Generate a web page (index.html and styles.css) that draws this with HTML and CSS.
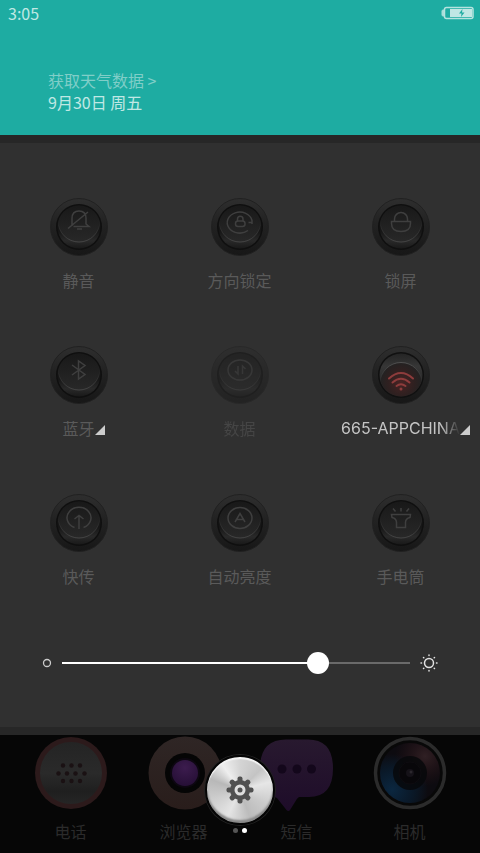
FILE: index.html
```html
<!DOCTYPE html>
<html lang="zh-CN">
<head>
<meta charset="utf-8">
<meta name="viewport" content="width=device-width, initial-scale=1">
<title>控制中心</title>
<link rel="stylesheet" href="styles.css">
</head>
<body>
<svg class="defs" aria-hidden="true">
  <defs>
    <linearGradient id="rim" x1="0" y1="0" x2="0" y2="1"><stop offset="0" stop-color="#2e2e2e"/><stop offset=".4" stop-color="#232323"/><stop offset="1" stop-color="#171717"/></linearGradient>
    <linearGradient id="side" x1="0" y1="0" x2="0" y2="1"><stop offset=".6" stop-color="#161616"/><stop offset=".82" stop-color="#292929"/><stop offset="1" stop-color="#191919"/></linearGradient>
    <linearGradient id="face" x1="0" y1="0" x2="0" y2="1"><stop offset=".1" stop-color="#181818"/><stop offset="1" stop-color="#282828"/></linearGradient>
    <linearGradient id="edge" x1="0" y1="0" x2="0" y2="1"><stop offset=".5" stop-color="#444" stop-opacity="0"/><stop offset="1" stop-color="#444"/></linearGradient>
    <linearGradient id="edge-on" x1="0" y1="0" x2="0" y2="1"><stop offset="0" stop-color="#505050"/><stop offset=".5" stop-color="#444" stop-opacity="0"/></linearGradient>
    <linearGradient id="side-on" x1="0" y1="0" x2="0" y2="1"><stop offset="0" stop-color="#242424"/><stop offset=".3" stop-color="#363636"/><stop offset="1" stop-color="#1d1d1d"/></linearGradient>
    <radialGradient id="face-on" cx=".5" cy=".48" r=".5"><stop offset="0" stop-color="#482323"/><stop offset=".6" stop-color="#2f2020"/><stop offset="1" stop-color="#222"/></radialGradient>
    <clipPath id="well"><circle cx="29" cy="29" r="21.500"/></clipPath>
  </defs>
  <symbol id="knob" viewBox="0 0 58 58">
    <circle cx="29" cy="29" r="28.500" fill="url(#rim)" stroke="#212121" stroke-width="1"/>
    <circle cx="29" cy="29" r="23" fill="#0f0f0f"/>
    <circle cx="29" cy="29" r="21.500" fill="url(#side)"/>
    <g clip-path="url(#well)"><circle cx="29" cy="23" r="21" fill="url(#face)" stroke="url(#edge)"/></g>
  </symbol>
  <symbol id="knob-on" viewBox="0 0 58 58">
    <circle cx="29" cy="29" r="28.500" fill="url(#rim)" stroke="#212121" stroke-width="1"/>
    <circle cx="29" cy="29" r="23" fill="#101010"/>
    <circle cx="29" cy="29" r="21.500" fill="url(#side-on)"/>
    <g clip-path="url(#well)"><circle cx="29" cy="37.500" r="21" fill="url(#face-on)" stroke="url(#edge-on)"/></g>
  </symbol>
</svg>

<header class="header">
  <div class="status">
    <time>3:05</time>
    <svg class="battery" viewBox="0 0 34 14" role="img" aria-label="正在充电">
      <path d="M3.500 4H2q-1 0-1 1v4q0 1 1 1h1.500" fill="#a9dfda" stroke="#a9dfda"/>
      <rect x="3.500" y="1.500" width="28.500" height="11" rx="2" fill="none" stroke="#b5e3df" stroke-width="1.500"/>
      <rect x="9" y="3" width="22" height="8" fill="#c0e7e4"/>
      <path d="M21.500 3l-3.500 4.500h2.500l-.5 3.500 3.500-4.500h-2.500z" fill="#1eaca2"/>
    </svg>
  </div>
  <div class="weather">
    <a class="weather-link" href="#">获取天气数据 &gt;</a>
    <span>9月30日 周五</span>
  </div>
</header>

<main class="panel">
  <div class="toggles">
    <button class="toggle" type="button">
      <svg class="knob" viewBox="0 0 58 58"><use href="#knob"/><g class="glyph">
        <path d="M22 28v-7.500q0-7.500 7-7.500t7 7.500V26l3 2.500H23.500M27 31h5M18 30.500L38 14"/></g></svg>
      <span class="label">静音</span>
    </button>
    <button class="toggle" type="button">
      <svg class="knob" viewBox="0 0 58 58"><use href="#knob"/><g class="glyph">
        <path d="M37 32.500A12.500 10.500 0 1 1 41 22.500V26M37.500 24.500h3.500"/><rect x="24.500" y="23" width="9.500" height="5.500" rx="2.500"/><path d="M26.500 23v-2a2.750 2.750 0 0 1 5.500 0v2"/></g></svg>
      <span class="label">方向锁定</span>
    </button>
    <button class="toggle" type="button">
      <svg class="knob" viewBox="0 0 58 58"><use href="#knob"/><g class="glyph">
        <path d="M19.500 23.500h19v2q0 8-9.500 8t-9.500-8zM22.500 23v-2a6.500 6.500 0 0 1 13 0v2"/></g></svg>
      <span class="label">锁屏</span>
    </button>
    <button class="toggle" type="button">
      <svg class="knob" viewBox="0 0 58 58"><use href="#knob"/><g class="glyph">
        <path d="M22 19l13 9.500-6.500 4.500V15l6.500 4.500L22 29"/></g></svg>
      <span class="label more">蓝牙</span>
    </button>
    <button class="toggle" type="button" disabled>
      <svg class="knob" viewBox="0 0 58 58"><use href="#knob"/><g class="glyph">
        <ellipse cx="29" cy="24" rx="12" ry="10"/><path d="M27 20v8l-3-3M31.500 28v-8l3 3"/></g></svg>
      <span class="label">数据</span>
    </button>
    <button class="toggle on" type="button" aria-pressed="true">
      <svg class="knob" viewBox="0 0 58 58"><use href="#knob-on"/><g class="wifi">
        <path d="M17 32.500q12-11 24 0M20.500 36.500q8.500-7.500 17 0M24.500 40q4.500-3.500 9 0"/><circle cx="29" cy="43" r="1.500"/></g></svg>
      <span class="label more"><span class="ssid">665-APPCHINA</span></span>
    </button>
    <button class="toggle" type="button">
      <svg class="knob" viewBox="0 0 58 58"><use href="#knob"/><g class="glyph">
        <path d="M24.500 33.500A12 10.500 0 1 1 33.500 33.500M29 35V21.500M24.500 25l4.500-3.500 4.500 3.500"/></g></svg>
      <span class="label">快传</span>
    </button>
    <button class="toggle" type="button">
      <svg class="knob" viewBox="0 0 58 58"><use href="#knob"/><g class="glyph">
        <ellipse cx="29" cy="24" rx="12" ry="10.500"/><path d="M24 28l5-8.500 5 8.500M26 25.500h6"/></g></svg>
      <span class="label">自动亮度</span>
    </button>
    <button class="toggle" type="button">
      <svg class="knob" viewBox="0 0 58 58"><use href="#knob"/><g class="glyph">
        <path d="M19.500 20.500h19l-.5 3q-4.500 1-4.500 5v5h-9v-5q0-4-4.500-5zM29 17.500v-3.500M23.500 17.500l-2.500-3M34.500 17.500l2.500-3"/></g></svg>
      <span class="label">手电筒</span>
    </button>
  </div>
  <div class="brightness">
    <svg class="dim" viewBox="0 0 10 10"><circle cx="5" cy="5" r="3.500" fill="none" stroke="#ccc" stroke-width="1.300"/></svg>
    <input class="slider" type="range" min="0" max="100" value="75" aria-label="亮度">
    <svg class="bright" viewBox="0 0 18 18" fill="none" stroke="#e2e2e2" stroke-width="1.500" stroke-linecap="round"><circle cx="9" cy="9" r="4.500"/><path d="M9 1v.5M9 16.500v.5M1 9h.5M16.500 9h.5M3.500 3.500l.3.3M14.200 14.200l.3.3M3.500 14.500l.3-.3M14.200 3.800l.3-.3"/></svg>
  </div>
</main>

<footer class="dock">
  <nav class="apps">
    <a class="app" href="#">
      <svg class="app-icon" viewBox="0 0 74 74">
        <defs><linearGradient id="phone" x1="0" y1="0" x2="0" y2="1"><stop offset="0" stop-color="#242424"/><stop offset=".5" stop-color="#2a2a2a"/><stop offset=".8" stop-color="#1f1f1f"/><stop offset="1" stop-color="#252525"/></linearGradient></defs>
        <circle cx="37" cy="37" r="36" fill="#2c1a1b"/><circle cx="37" cy="37" r="31" fill="url(#phone)"/>
        <g fill="#1a1113"><circle cx="29" cy="29.500" r="2.200"/><circle cx="37.500" cy="29.500" r="2.200"/><circle cx="46" cy="29.500" r="2.200"/><circle cx="24.500" cy="37.500" r="2.200"/><circle cx="33" cy="37.500" r="2.200"/><circle cx="41.500" cy="37.500" r="2.200"/><circle cx="50.500" cy="37.500" r="2.200"/><circle cx="29" cy="45" r="2.200"/><circle cx="37.500" cy="45" r="2.200"/><circle cx="46" cy="45" r="2.200"/></g>
      </svg><span>电话</span>
    </a>
    <a class="app" href="#">
      <svg class="app-icon" viewBox="0 0 74 74">
        <defs><linearGradient id="ring" x1="0" y1="0" x2="0" y2="1"><stop offset="0" stop-color="#2f2625"/><stop offset="1" stop-color="#291d1b"/></linearGradient>
        <radialGradient id="iris" cx=".5" cy=".3" r=".7"><stop offset="0" stop-color="#3c1c4e"/><stop offset="1" stop-color="#260f36"/></radialGradient></defs>
        <circle cx="38" cy="37" r="36.500" fill="url(#ring)"/><circle cx="38" cy="37" r="20" fill="#050505"/><circle cx="38" cy="37" r="15" fill="#0d0711"/><circle cx="38" cy="37" r="13" fill="url(#iris)"/>
      </svg><span>浏览器</span>
    </a>
    <a class="app" href="#">
      <svg class="app-icon" viewBox="0 0 74 74">
        <defs><linearGradient id="bubble" x1="0" y1="0" x2="0" y2="1"><stop offset="0" stop-color="#28192f"/><stop offset="1" stop-color="#1e0c29"/></linearGradient></defs>
        <path d="M26 3.500h22q25 0 25 29T48 61h-9q-2 1-4 5l-5 8q-1.500 2-3.500 0L17 62Q0 57 0 32.500 0 3.500 26 3.500z" fill="url(#bubble)"/>
        <g fill="#13071b"><circle cx="22" cy="33" r="4.500"/><circle cx="37" cy="33" r="4.500"/><circle cx="51.500" cy="33" r="4.500"/></g>
      </svg><span>短信</span>
    </a>
    <a class="app" href="#">
      <svg class="app-icon" viewBox="0 0 74 74">
        <defs><radialGradient id="lens-blue" cx=".2" cy=".78" r=".6"><stop offset="0" stop-color="#0b2740"/><stop offset=".6" stop-color="#0a1827"/><stop offset="1" stop-color="#0a1b2b" stop-opacity="0"/></radialGradient>
        <radialGradient id="lens-red" cx=".75" cy=".22" r=".5"><stop offset="0" stop-color="#302024"/><stop offset="1" stop-color="#2a1216" stop-opacity="0"/></radialGradient></defs>
        <circle cx="37" cy="37" r="34.500" fill="#080808" stroke="#2b2b2b" stroke-width="3.500"/><circle cx="37" cy="37" r="30" fill="#0d0b10"/><circle cx="37" cy="37" r="30" fill="url(#lens-blue)"/><circle cx="37" cy="37" r="30" fill="url(#lens-red)"/>
        <circle cx="37" cy="37" r="17" fill="#07080b" opacity=".85"/><circle cx="37" cy="37" r="11" fill="#08070a" stroke="#0e0c10"/><circle cx="37" cy="37" r="4" fill="#151218"/><circle cx="38" cy="36" r="1.500" fill="#2b272d"/>
      </svg><span>相机</span>
    </a>
  </nav>
  <button class="settings" type="button" aria-label="设置">
    <svg class="gear" viewBox="-14 -14 28 28">
      <g fill="#505050"><g id="teeth"><rect x="-2.500" y="-13.500" width="5" height="27" rx="2"/><rect x="-13.500" y="-2.500" width="27" height="5" rx="2"/></g><use href="#teeth" transform="rotate(45)"/><circle r="10"/></g>
      <circle r="5.500" fill="#dedede"/><circle r="2.500" fill="#505050"/>
    </svg>
  </button>
  <div class="pager"><i></i><i class="current"></i></div>
</footer>
</body>
</html>
```
FILE: styles.css
```css
* {
  box-sizing: border-box;
}

body {
  margin: 0;
  min-height: 100vh;
  display: flex;
  flex-direction: column;
  background: #060606;
  color: #5a5a5a;
  font: 400 16px/22px "Noto Sans CJK SC", sans-serif;
}

button {
  padding: 0;
  border: 0;
  background: none;
  color: inherit;
  font: inherit;
}

a {
  color: inherit;
  text-decoration: none;
}

svg {
  display: block;
}

.defs {
  position: absolute;
  width: 0;
  height: 0;
}

.header {
  background: #1eaca2;
  color: #c0e8e4;
  padding-bottom: 22px;
}

.status {
  display: flex;
  justify-content: space-between;
  align-items: center;
  height: 26px;
  padding: 0 5px 0 8px;
}

.battery {
  width: 34px;
  height: 14px;
}

.weather {
  display: flex;
  flex-direction: column;
  padding: 43px 48px 0;
}

.weather-link {
  color: #80cec8;
}

.panel {
  background: #303030;
  border: solid #272727;
  border-width: 8px 0;
  padding: 54px 0 53px;
}

.toggles {
  display: grid;
  grid-template-columns: repeat(3, 1fr);
  row-gap: 54px;
  margin: 0 -1px 0 -2px;
}

.toggle {
  display: flex;
  flex-direction: column;
  align-items: center;
  gap: 12px;
}

.toggle:disabled {
  opacity: 0.5;
}

.knob {
  width: 58px;
  height: 60px;
}

.glyph {
  fill: none;
  stroke: #3f3f3f;
  stroke-width: 1.5;
}

.wifi {
  fill: #8e3c3c;
}

.wifi path {
  fill: none;
  stroke: #8e3c3c;
  stroke-width: 2;
  stroke-linecap: round;
}

.label {
  position: relative;
}

.more::after {
  content: "";
  position: absolute;
  left: 100%;
  bottom: 4px;
  border: 5px solid transparent;
  border-right-color: #ccc;
  border-bottom-color: #ccc;
}

.on {
  color: #c4c4c4;
}

.ssid {
  display: block;
  max-width: 122px;
  overflow: hidden;
  font-family: Inter, sans-serif;
  mask-image: linear-gradient(to right, #000 84%, transparent);
}

.brightness {
  display: flex;
  align-items: center;
  gap: 10px;
  margin-top: 65px;
  padding: 0 42px;
}

.dim {
  width: 10px;
  height: 10px;
}

.bright {
  width: 18px;
  height: 18px;
}

.slider {
  flex: 1;
  min-width: 0;
  height: 22px;
  margin: 0;
  appearance: none;
  background: linear-gradient(to right, #fff 75%, #6a6a6a 75%) center / 100% 2px no-repeat;
}

.slider::-webkit-slider-thumb {
  appearance: none;
  width: 22px;
  height: 22px;
  border-radius: 50%;
  background: #fff;
}

.dock {
  position: relative;
  flex: 1;
  padding: 0 14px;
  color: #2b2b2b;
}

.apps {
  display: grid;
  grid-template-columns: repeat(4, 1fr);
}

.app {
  display: flex;
  flex-direction: column;
  align-items: center;
  gap: 9px;
}

.app-icon {
  width: 74px;
  height: 76px;
  overflow: visible;
}

.settings {
  position: absolute;
  top: 20px;
  left: 50%;
  width: 70px;
  height: 70px;
  display: grid;
  place-items: center;
  transform: translateX(-50%);
  border: 2px solid #050505;
  border-radius: 50%;
  background: conic-gradient(#d4d4d4, #c4c4c4 45deg, #e6e6e6 75deg, #cacaca 120deg, #bcbcbc 160deg, #e4e4e4 205deg, #cecece 250deg, #b8b8b8 290deg, #eee 325deg, #d4d4d4);
  box-shadow: 0 0 0 1px #222, inset 0 2px 1px #f4f4f4, inset 0 -3px 2px #888;
}

.gear {
  width: 28px;
  height: 28px;
}

.pager {
  position: absolute;
  top: 93px;
  left: 50%;
  display: flex;
  gap: 4px;
  transform: translateX(-50%);
}

.pager i {
  width: 5px;
  height: 5px;
  border-radius: 50%;
  background: #555;
}

.pager .current {
  background: #fff;
}
```
